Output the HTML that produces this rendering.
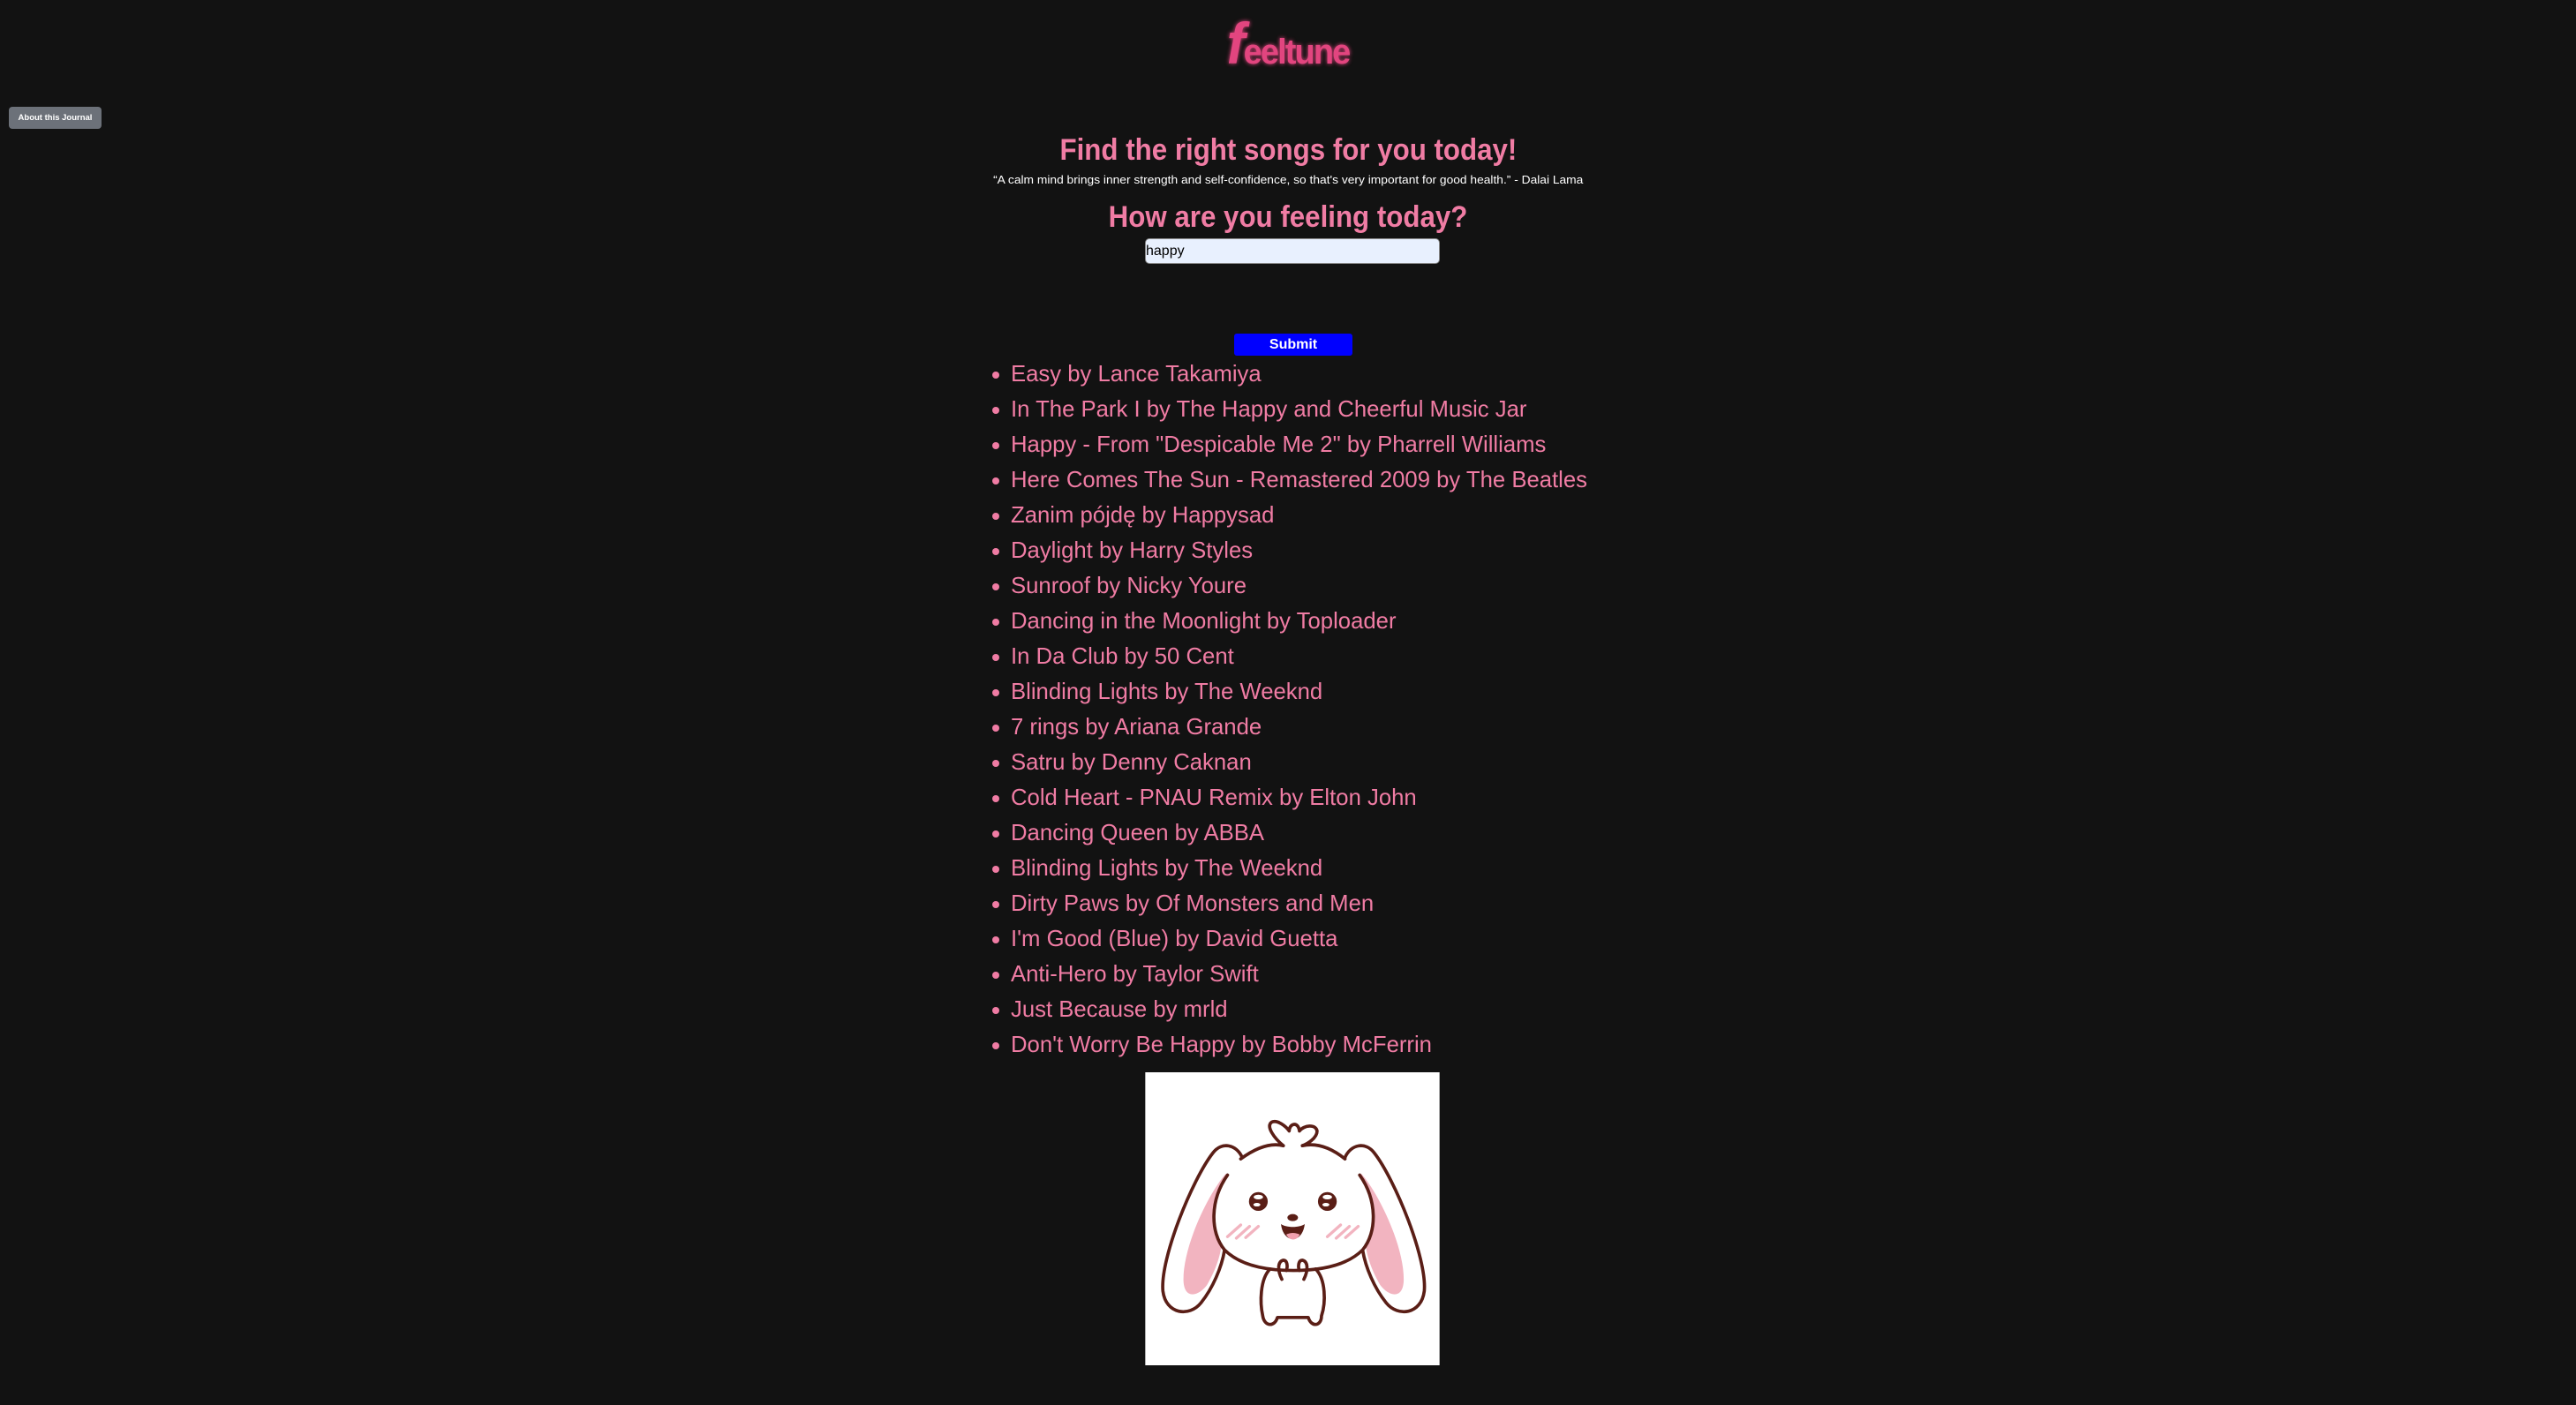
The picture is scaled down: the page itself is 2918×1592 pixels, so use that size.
<!DOCTYPE html>
<html><head><meta charset="utf-8"><style>
html,body{margin:0;padding:0;background:#121212;width:2918px;height:1592px;overflow:hidden;font-family:"Liberation Sans","DejaVu Sans",sans-serif;}
.abs{position:absolute;}
.pink{color:#f07ca4;}
.c{left:0;width:2918px;text-align:center;}
.sx{display:inline-block;transform-origin:center;}
ul{position:absolute;left:1124px;top:404px;margin:0;padding:0;list-style:none;}
li{height:40px;line-height:40px;font-size:25.7px;color:#f07ca4;position:relative;padding-left:21px;white-space:nowrap;}
li:before{content:"";position:absolute;left:0;top:17px;width:8px;height:8px;border-radius:50%;background:#f07ca4;}
</style></head><body>
<div class="abs" style="left:10px;top:121px;width:105px;height:25px;background:#6c7179;border-radius:4px;color:#fff;font-size:9.5px;font-weight:bold;line-height:25px;text-align:center;">About this Journal</div>

<div class="abs c" style="top:14px;font-size:40px;font-weight:bold;color:#e2457f;text-shadow:0 0 5px #e2457f;line-height:70px;"><span class="sx" style="transform:scaleX(.95);letter-spacing:-2px"><span style="font-size:66px;font-style:italic">f</span>eeltune</span></div>

<div class="abs c pink" style="top:151px;font-size:34px;font-weight:bold;line-height:38px;"><span class="sx" style="transform:scaleX(.92)">Find the right songs for you today!</span></div>
<div class="abs c" style="top:196px;font-size:13px;color:#fff;line-height:16px;"><span class="sx" style="transform:scaleX(1.06)">“A calm mind brings inner strength and self-confidence, so that's very important for good health.” - Dalai Lama</span></div>
<div class="abs c pink" style="top:227px;font-size:34px;font-weight:bold;line-height:38px;"><span class="sx" style="transform:scaleX(.92)">How are you feeling today?</span></div>
<div class="abs" style="left:1297px;top:270px;width:332px;height:27px;background:#e8f0fe;border:1px solid #888;border-radius:5px;font-size:16px;line-height:27px;color:#000;">happy</div>
<div class="abs" style="left:1398px;top:378px;width:134px;height:25px;background:#0000ff;border-radius:3px;color:#fff;font-size:16px;font-weight:bold;line-height:25px;text-align:center;">Submit</div>

<ul>
<li>Easy by Lance Takamiya</li>
<li>In The Park I by The Happy and Cheerful Music Jar</li>
<li>Happy - From "Despicable Me 2" by Pharrell Williams</li>
<li>Here Comes The Sun - Remastered 2009 by The Beatles</li>
<li>Zanim pójdę by Happysad</li>
<li>Daylight by Harry Styles</li>
<li>Sunroof by Nicky Youre</li>
<li>Dancing in the Moonlight by Toploader</li>
<li>In Da Club by 50 Cent</li>
<li>Blinding Lights by The Weeknd</li>
<li>7 rings by Ariana Grande</li>
<li>Satru by Denny Caknan</li>
<li>Cold Heart - PNAU Remix by Elton John</li>
<li>Dancing Queen by ABBA</li>
<li>Blinding Lights by The Weeknd</li>
<li>Dirty Paws by Of Monsters and Men</li>
<li>I'm Good (Blue) by David Guetta</li>
<li>Anti-Hero by Taylor Swift</li>
<li>Just Because by mrld</li>
<li>Don't Worry Be Happy by Bobby McFerrin</li>
</ul>

<svg class="abs" style="left:1297px;top:1215px" width="334" height="332" viewBox="20 15 1002 998">
<rect x="20" y="15" width="1002" height="998" fill="#fff"/>
<g fill="none" stroke="#5a1e16" stroke-width="11" stroke-linecap="round" stroke-linejoin="round">
<path d="M295,360 C240,420 150,600 150,720 C150,790 200,780 230,740 C270,670 285,610 280,560 Z" fill="#f2b4c0" stroke="none"/>
<path d="M755,360 C810,420 900,600 900,720 C900,790 850,780 820,740 C780,670 765,610 770,560 Z" fill="#f2b4c0" stroke="none"/>
<path d="M350,305 C330,260 280,250 250,290 C180,380 70,650 80,760 C90,840 170,850 210,800 C250,750 280,680 290,620"/>
<path d="M700,305 C720,260 770,250 800,290 C870,380 980,650 970,760 C960,840 880,850 840,800 C800,750 770,680 760,620"/>
<path d="M300,365 C240,450 240,560 290,620 C350,680 450,690 525,690 C600,690 700,680 760,620 C810,560 810,450 750,365" fill="#fff"/>
<path d="M345,310 C400,270 450,255 490,265 M555,265 C600,255 650,270 700,310"/>
<path d="M490,265 C460,240 430,200 450,185 C470,175 500,200 510,215 C510,190 540,180 545,215 C560,195 600,190 605,215 C605,240 570,260 555,265"/>
<path d="M445,685 C410,720 410,800 420,845 C425,880 460,885 470,850 L575,850 C585,885 620,880 620,845 C635,800 635,720 600,685"/>
<path d="M485,720 C470,690 470,660 490,655 C505,655 505,680 500,690 M560,720 C575,690 575,660 555,655 C540,655 540,680 545,690"/>
<path d="M300,575 L345,535 M330,580 L375,540 M362,578 L405,540 M640,575 L685,535 M670,580 L715,540 M702,578 L745,540" stroke="#f2b4c0" stroke-width="10"/>
</g>
<circle cx="405" cy="455" r="32" fill="#5a1e16"/><circle cx="640" cy="455" r="32" fill="#5a1e16"/>
<ellipse cx="405" cy="440" rx="16" ry="8" fill="#fff"/><ellipse cx="400" cy="466" rx="12" ry="6" fill="#fff"/>
<ellipse cx="640" cy="440" rx="16" ry="8" fill="#fff"/><ellipse cx="635" cy="466" rx="12" ry="6" fill="#fff"/>
<ellipse cx="522" cy="510" rx="18" ry="12" fill="#5a1e16"/>
<path d="M482,532 C490,600 555,600 563,532 C545,545 500,545 482,532 Z" fill="#5a1e16"/>
<path d="M500,568 C512,590 535,590 546,568 C530,560 515,560 500,568 Z" fill="#f2a0ae"/>
</svg>
</body></html>
